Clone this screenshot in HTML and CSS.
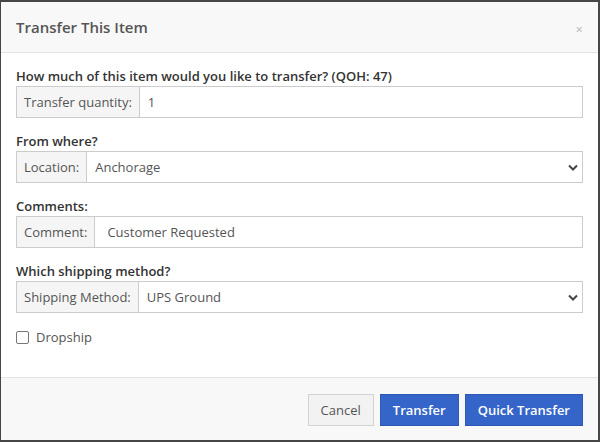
FILE: index.html
```html
<!DOCTYPE html>
<html>
<head>
<meta charset="utf-8">
<link rel="stylesheet" href="styles.css">
</head>
<body>
<div class="modal">
  <div class="modal-header">
    <h4 class="modal-title">Transfer This Item</h4>
    <span class="close">×</span>
  </div>
  <div class="modal-body">
    <div class="form-group">
      <label class="label">How much of this item would you like to transfer? (QOH: 47)</label>
      <div class="input-group">
        <span class="addon">Transfer quantity:</span>
        <span class="control">1</span>
      </div>
    </div>
    <div class="form-group">
      <label class="label">From where?</label>
      <div class="input-group">
        <span class="addon">Location:</span>
        <span class="control select">Anchorage
          <svg class="chev" width="10" height="7" viewBox="0 0 10 7"><path d="M1 1.5 L5 5.5 L9 1.5" fill="none" stroke="#444" stroke-width="2"/></svg>
        </span>
      </div>
    </div>
    <div class="form-group">
      <label class="label">Comments:</label>
      <div class="input-group">
        <span class="addon">Comment:</span>
        <span class="control wide">Customer Requested</span>
      </div>
    </div>
    <div class="form-group">
      <label class="label">Which shipping method?</label>
      <div class="input-group">
        <span class="addon">Shipping Method:</span>
        <span class="control select">UPS Ground
          <svg class="chev" width="10" height="7" viewBox="0 0 10 7"><path d="M1 1.5 L5 5.5 L9 1.5" fill="none" stroke="#444" stroke-width="2"/></svg>
        </span>
      </div>
    </div>
    <div class="check">
      <span class="box"></span>
      <span class="check-label">Dropship</span>
    </div>
  </div>
  <div class="modal-footer">
    <button class="btn btn-default">Cancel</button>
    <button class="btn btn-primary">Transfer</button>
    <button class="btn btn-primary">Quick Transfer</button>
  </div>
</div>
</body>
</html>
```

FILE: styles.css
```css
* { box-sizing: border-box; }
html, body { margin: 0; padding: 0; }
body {
  width: 600px;
  height: 442px;
  background: #464646;
  font-family: "Open Sans", "Noto Sans", sans-serif;
  padding: 2px 2px 0 1px;
  overflow: hidden;
}
.modal {
  width: 597px;
  height: 438px;
  background: #fff;
  display: flex;
  flex-direction: column;
}
.modal-header {
  height: 51px;
  background: #f8f8f8;
  border-bottom: 1px solid #e3e3e3;
  display: flex;
  align-items: center;
  justify-content: space-between;
  padding: 0 15px 0 15px;
}
.modal-title {
  margin: 0;
  font-size: 15px;
  font-weight: 600;
  color: #555;
}
.close {
  color: #c4c4c4;
  font-size: 13px;
  font-weight: 600;
  position: relative;
  top: 2px;
}
.modal-body {
  flex: 1;
  padding: 14px 15px 0 15px;
}
.form-group { margin-bottom: 14px; }
.label {
  display: block;
  font-size: 13px;
  line-height: 18px;
  font-weight: 600;
  color: #333;
  margin-bottom: 1px;
}
.input-group {
  display: flex;
  height: 32px;
  border: 1px solid #ccc;
}
.addon {
  display: flex;
  align-items: center;
  padding: 0 7px;
  background: #f5f5f5;
  border-right: 1px solid #ccc;
  font-size: 13px;
  color: #555;
}
.control {
  flex: 1;
  display: flex;
  align-items: center;
  padding: 0 8px;
  font-size: 13px;
  color: #555;
}
.control.wide { padding-left: 12px; }
.select { justify-content: space-between; padding-right: 4px; }
.chev { margin-top: 1px; }
.check {
  display: flex;
  align-items: center;
  height: 18px;
  margin-top: 15px;
}
.box {
  width: 13px;
  height: 13px;
  border: 1px solid #767676;
  border-radius: 2px;
  background: #fff;
  margin-right: 7px;
}
.check-label { font-size: 13px; color: #555; }
.modal-footer {
  height: 63px;
  background: #f8f8f8;
  border-top: 1px solid #e3e3e3;
  display: flex;
  justify-content: flex-end;
  align-items: flex-start;
  gap: 6px;
  padding: 16px 15px 0 0;
}
.btn {
  height: 32px;
  font-family: "Open Sans", "Noto Sans", sans-serif;
  font-size: 13px;
  padding: 0 12px;
  border: 1px solid;
  border-radius: 0;
}
.btn-default {
  background: #f2f2f2;
  border-color: #d2d2d2;
  color: #555;
}
.btn-primary {
  background: #3565c8;
  border-color: #2d58b4;
  color: #fff;
  font-weight: 600;
}
```
